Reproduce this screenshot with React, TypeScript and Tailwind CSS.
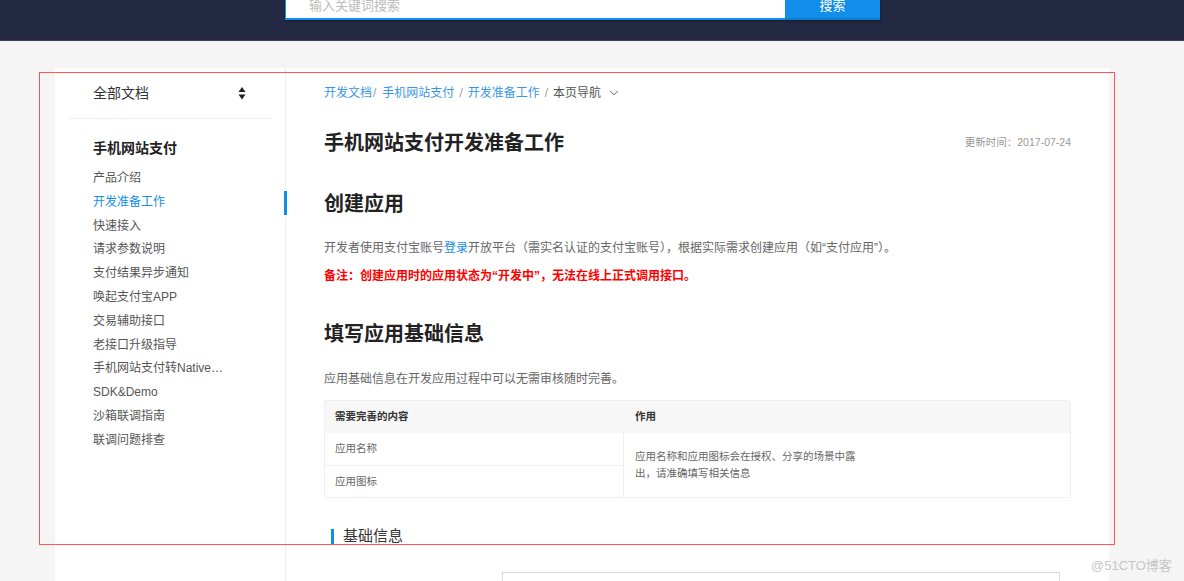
import { ChevronDown } from "lucide-react";

const menu = [
  "产品介绍",
  "开发准备工作",
  "快速接入",
  "请求参数说明",
  "支付结果异步通知",
  "唤起支付宝APP",
  "交易辅助接口",
  "老接口升级指导",
  "手机网站支付转Native…",
  "SDK&Demo",
  "沙箱联调指南",
  "联调问题排查",
];

const SortIcon = () => (
  <svg width="8" height="13" viewBox="0 0 8 13" fill="#222">
    <path d="M4 0 L7.5 5 L0.5 5 Z" />
    <path d="M0.5 7.5 L7.5 7.5 L4 12.5 Z" />
  </svg>
);

const Sidebar = () => (
  <aside className="w-[231px] shrink-0 border-r border-[#ededed] bg-white">
    <div className="px-[13px]">
      <div className="flex h-[51px] items-center justify-between border-b border-[#efefef] pl-[25px] pr-[26px]">
        <span className="text-[14px] text-[#333]">全部文档</span>
        <SortIcon />
      </div>
    </div>
    <div className="pl-[38px] pt-[19px] text-[14px] font-bold leading-[20px] text-[#222]">手机网站支付</div>
    <ul className="mt-[9px]">
      {menu.map((m) => {
        const active = m === "开发准备工作";
        return (
          <li
            key={m}
            className={`relative pl-[38px] text-[12px] leading-[23.8px] ${active ? "text-[#108ee9]" : "text-[#555]"}`}
          >
            {m}
            {active && <span className="absolute right-[-2px] top-0 h-[24px] w-[3px] bg-[#108ee9]" />}
          </li>
        );
      })}
    </ul>
  </aside>
);

const Crumb = ({ children }: { children: React.ReactNode }) => (
  <span className="text-[#3b95e6]">{children}</span>
);

const Sep = () => <span className="mx-[5px] text-[#999]">/</span>;

const Main = () => (
  <main className="flex-1 px-[38px] pt-[15px] text-[#666]">
    <div className="flex items-center text-[12px] leading-[20px]">
      <Crumb>开发文档</Crumb>
      <span className="ml-[1px] mr-[6px] text-[#999]">/</span>
      <Crumb>手机网站支付</Crumb>
      <Sep />
      <Crumb>开发准备工作</Crumb>
      <Sep />
      <span className="text-[#555]">本页导航</span>
      <ChevronDown size={14} strokeWidth={1.6} className="ml-[6px] text-[#555]" />
    </div>

    <div className="mt-[26px] flex items-center justify-between">
      <h1 className="text-[20px] font-bold leading-[28px] text-[#222]">手机网站支付开发准备工作</h1>
      <span className="text-[10.5px] text-[#999]">更新时间：2017-07-24</span>
    </div>

    <h2 className="mt-[33px] text-[20px] font-bold leading-[28px] text-[#222]">创建应用</h2>
    <p className="mt-[20px] text-[12px] leading-[20px]">
      开发者使用支付宝账号<span className="text-[#108ee9]">登录</span>开放平台（需实名认证的支付宝账号），根据实际需求创建应用（如“支付应用”）。
    </p>
    <p className="mt-[8px] text-[12px] font-bold leading-[20px] text-[#f00]">
      备注：创建应用时的应用状态为“开发中”，无法在线上正式调用接口。
    </p>

    <h2 className="mt-[34px] text-[20px] font-bold leading-[28px] text-[#222]">填写应用基础信息</h2>
    <p className="mt-[21px] text-[12px] leading-[20px]">应用基础信息在开发应用过程中可以无需审核随时完善。</p>

    <div className="mt-[11px] overflow-hidden rounded-[3px] border border-[#eee] text-[10.5px]">
      <div className="grid h-[32px] grid-cols-[299px_1fr] items-center bg-[#f7f7f7] font-bold text-[#333]">
        <div className="pl-[10px]">需要完善的内容</div>
        <div className="pl-[11px]">作用</div>
      </div>
      <div className="grid grid-cols-[299px_1fr]">
        <div className="border-r border-[#eee]">
          <div className="flex h-[33px] items-center border-b border-[#f0f0f0] pl-[10px]">应用名称</div>
          <div className="flex h-[31px] items-center pl-[10px]">应用图标</div>
        </div>
        <div className="flex items-center pl-[11px]">
          <div className="w-[222px] leading-[17px]">应用名称和应用图标会在授权、分享的场景中露出，请准确填写相关信息</div>
        </div>
      </div>
    </div>

    <div className="mt-[28px] flex items-center pl-[7px]">
      <span className="h-[15px] w-[3px] bg-[#108ee9]" />
      <span className="ml-[9px] text-[15px] leading-[20px] text-[#333]">基础信息</span>
    </div>

    <div className="mt-[26px] flex items-start">
      <div className="w-[166px] pt-[8px] text-right text-[12px] text-[#666]">应用名称</div>
      <div className="ml-[12px] h-[32px] w-[558px] border border-[#d9d9d9] px-[8px] pt-[6px] text-[12px] text-[#333]">帮我支付宝开发demo</div>
    </div>
  </main>
);

export default function App() {
  return (
    <div className="relative flex h-[581px] flex-col overflow-hidden bg-[#f5f5f5] font-['Liberation_Sans','Noto_Sans_CJK_SC',sans-serif]">
      <header className="flex h-[41px] shrink-0 items-end overflow-hidden border-b border-[#3d4256] bg-[#232942] pb-[20px] pl-[285px]">
        <div className="flex h-[32px] shrink-0 shadow-[0_1px_2px_rgba(0,0,0,0.4)]">
          <div className="flex w-[500px] items-center border-b-2 border-l border-[#108ee9] bg-white pl-[23px] pt-[6px] text-[13px] text-[#bbb]">
            输入关键词搜索
          </div>
          <div className="flex w-[95px] items-center justify-center border-b-2 border-[#0c7dd0] bg-[#108ee9] pt-[6px] text-[13px] text-white">
            搜索
          </div>
        </div>
      </header>

      <div className="ml-[55px] mt-[27px] flex w-[1054px] flex-1 bg-white">
        <Sidebar />
        <Main />
      </div>

      <div className="pointer-events-none absolute left-[39px] top-[72px] h-[473px] w-[1076px] border border-[#ff5555]" />
      <div className="pointer-events-none absolute left-[1091px] top-[556px] text-[13px] text-[#c6c6c6]">@51CTO博客</div>
    </div>
  );
}
